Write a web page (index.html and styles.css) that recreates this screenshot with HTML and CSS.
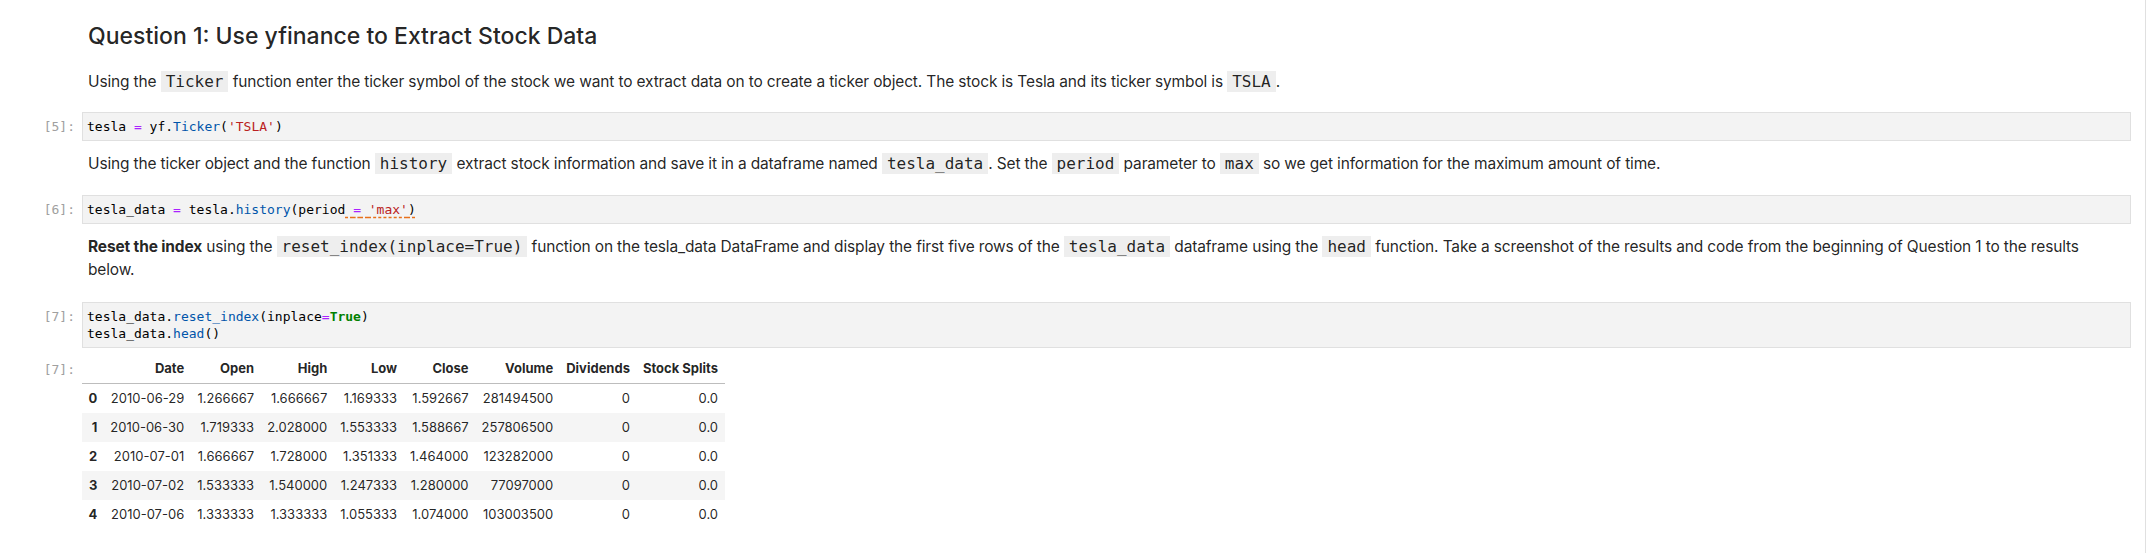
FILE: index.html
```html
<!DOCTYPE html>
<html>
<head>
<meta charset="utf-8">
<title>Question 1</title>
<link rel="stylesheet" href="styles.css">
</head>
<body>
<div class="page">
  <div class="notebook">
    <div class="cell md heading-cell">
      <div class="prompt"></div>
      <div class="md-body"><h2>Question 1: Use yfinance to Extract Stock Data</h2></div>
    </div>

    <div class="cell md p1">
      <div class="prompt"></div>
      <div class="md-body"><p>Using the <code>Ticker</code> function enter the ticker symbol of the stock we want to extract data on to create a ticker object. The stock is Tesla and its ticker symbol is <code>TSLA</code>.</p></div>
    </div>

    <div class="cell code c1">
      <div class="prompt">[5]:</div>
      <div class="editor"><pre>tesla <span class="o">=</span> yf.<span class="p">Ticker</span>(<span class="s">'TSLA'</span>)</pre></div>
    </div>

    <div class="cell md p2">
      <div class="prompt"></div>
      <div class="md-body"><p>Using the ticker object and the function <code>history</code> extract stock information and save it in a dataframe named <code>tesla_data</code>. Set the <code>period</code> parameter to <code>max</code> so we get information for the maximum amount of time.</p></div>
    </div>

    <div class="cell code c2">
      <div class="prompt">[6]:</div>
      <div class="editor"><pre>tesla_data <span class="o">=</span> tesla.<span class="p">history</span>(period<span class="lint"> <span class="o">=</span> <span class="s">'max'</span>)</span></pre></div>
    </div>

    <div class="cell md p3">
      <div class="prompt"></div>
      <div class="md-body"><p><strong>Reset the index</strong> using the <code>reset_index(inplace=True)</code> function on the tesla_data DataFrame and display the first five rows of the <code>tesla_data</code> dataframe using the <code>head</code> function. Take a screenshot of the results and code from the beginning of Question 1 to the results below.</p></div>
    </div>

    <div class="cell code c3">
      <div class="prompt">[7]:</div>
      <div class="editor"><pre>tesla_data.<span class="p">reset_index</span>(inplace<span class="o">=</span><span class="k">True</span>)
tesla_data.<span class="p">head</span>()</pre></div>
    </div>

    <div class="cell output out">
      <div class="prompt out-prompt">[7]:</div>
      <div class="out-body">
        <table class="df">
          <thead>
            <tr><th></th><th>Date</th><th>Open</th><th>High</th><th>Low</th><th>Close</th><th>Volume</th><th>Dividends</th><th>Stock Splits</th></tr>
          </thead>
          <tbody>
            <tr><th>0</th><td>2010-06-29</td><td>1.266667</td><td>1.666667</td><td>1.169333</td><td>1.592667</td><td>281494500</td><td>0</td><td>0.0</td></tr>
            <tr><th>1</th><td>2010-06-30</td><td>1.719333</td><td>2.028000</td><td>1.553333</td><td>1.588667</td><td>257806500</td><td>0</td><td>0.0</td></tr>
            <tr><th>2</th><td>2010-07-01</td><td>1.666667</td><td>1.728000</td><td>1.351333</td><td>1.464000</td><td>123282000</td><td>0</td><td>0.0</td></tr>
            <tr><th>3</th><td>2010-07-02</td><td>1.533333</td><td>1.540000</td><td>1.247333</td><td>1.280000</td><td>77097000</td><td>0</td><td>0.0</td></tr>
            <tr><th>4</th><td>2010-07-06</td><td>1.333333</td><td>1.333333</td><td>1.055333</td><td>1.074000</td><td>103003500</td><td>0</td><td>0.0</td></tr>
          </tbody>
        </table>
      </div>
    </div>
  </div>
</div>
</body>
</html>
```

FILE: styles.css
```css
* { box-sizing: border-box; }

html, body {
  margin: 0;
  padding: 0;
  background: #ffffff;
}

body {
  font-family: Inter, "Noto Sans", sans-serif;
  color: rgba(0, 0, 0, 0.87);
}

.page {
  width: 2146px;
  height: 553px;
  border-right: 1px solid #e0e0e0;
  overflow: hidden;
}

.notebook {
  padding-right: 14px;
}

.cell {
  display: flex;
  align-items: flex-start;
}

.prompt {
  flex: 0 0 82px;
  padding-right: 7px;
  text-align: right;
  font: 13px/17px "DejaVu Sans Mono", monospace;
  color: #a0a0a0;
}

.code .prompt {
  padding-top: 6px;
}

.md-body {
  flex: 1;
  padding: 0 26px 0 6px;
  min-width: 0;
}

h2 {
  margin: 0;
  font-size: 23px;
  line-height: 28px;
  font-weight: 500;
  color: rgba(0, 0, 0, 0.87);
}

p {
  margin: 0;
  font-size: 15.5px;
  line-height: 22.4px;
  letter-spacing: -0.15px;
}

p strong {
  font-weight: 700;
}

code {
  font-family: "DejaVu Sans Mono", monospace;
  font-size: 16px;
  letter-spacing: 0;
  background: #eeeeee;
  padding: 1px 5px;
}

.editor {
  flex: 1;
  background: #f3f3f3;
  border: 1px solid #e0e0e0;
  padding: 5px 4px;
}

.editor pre {
  margin: 0;
  font: 13px/17px "DejaVu Sans Mono", monospace;
  color: #000000;
}

.o { color: #aa22ff; }
.p { color: #0055aa; }
.s { color: #ba2121; }
.k { color: #008000; font-weight: bold; }

.lint {
  text-decoration: underline dashed #e8701a;
  text-underline-offset: 3px;
}

.heading-cell { padding-top: 22px; }
.p1 { margin-top: 20.5px; }
.c1 { margin-top: 19px; }
.p2 { margin-top: 12px; }
.c2 { margin-top: 19.5px; }
.p3 { margin-top: 12.5px; }
.c3 { margin-top: 20.5px; }
.out { margin-top: 6px; }

.out-prompt { padding-top: 7px; }

.out-body { flex: 1; }

table.df {
  border-collapse: collapse;
  border-spacing: 0;
  font-family: Inter, "Noto Sans", sans-serif;
  font-size: 13px;
  color: rgba(0, 0, 0, 0.87);
}

table.df th,
table.df td {
  padding: 6.5px;
  line-height: 16px;
  text-align: right;
  vertical-align: middle;
  white-space: nowrap;
}

table.df th { font-weight: 700; }

table.df thead th {
  border-bottom: 1px solid #bdbdbd;
}

table.df tbody tr:nth-child(even) {
  background: #f5f5f5;
}
```
